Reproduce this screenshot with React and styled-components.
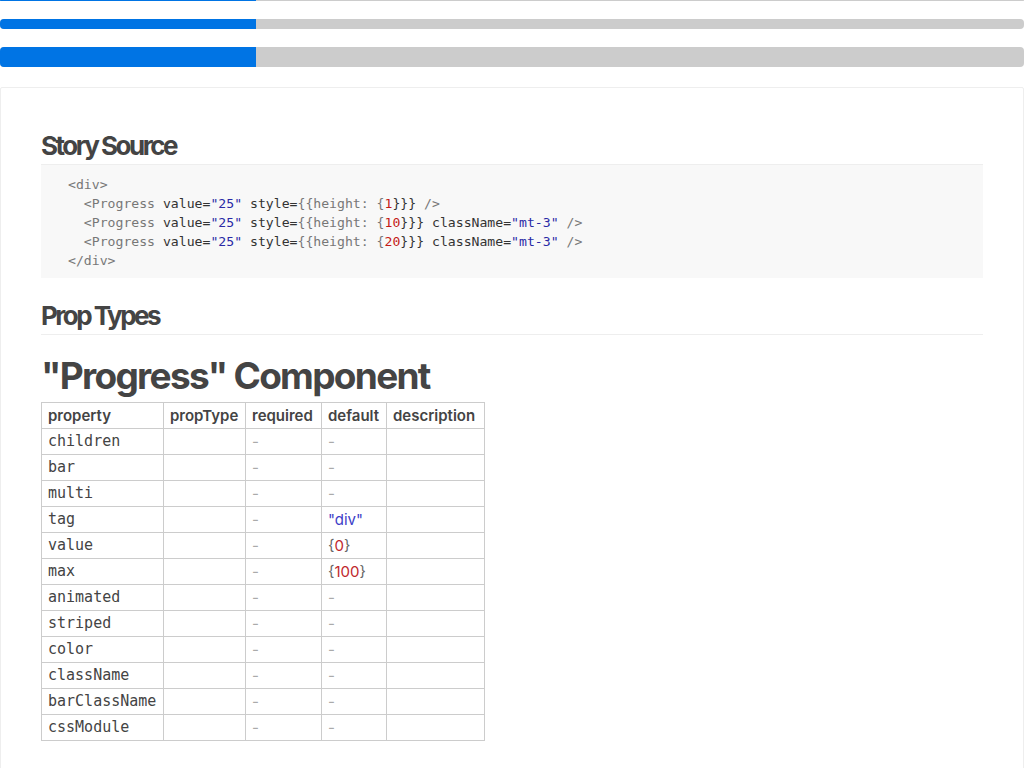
import React from "react";
import styled, { createGlobalStyle } from "styled-components";

const GlobalStyle = createGlobalStyle`
  html { overflow: hidden; }
  body {
    margin: 0;
    background: #fff;
    font-family: Inter, "Noto Sans", sans-serif;
    color: #444;
  }
`;

const Page = styled.div`
  display: flex;
  flex-direction: column;
`;

const Track = styled.div`
  display: flex;
  height: ${(p) => p.$h}px;
  margin-top: ${(p) => p.$mt || 0}px;
  background: #cccccc;
  border-radius: 4px;
  overflow: hidden;
`;

const Fill = styled.div`
  background: #0074e4;
  height: 100%;
`;

const Progress = ({ value, height, mt }) => (
  <Track $h={height} $mt={mt}>
    <Fill style={{ width: `${value}%` }} />
  </Track>
);

const InfoPanel = styled.section`
  margin: 20px 0 20px;
  padding: 20px 40px 40px;
  border: 1px solid #eee;
  border-radius: 2px;
  font-size: 15px;
  line-height: 1.45;
  color: #444;
`;

const SectionTitle = styled.h2`
  margin: 20px 0 0;
  padding: 1px 0 1px;
  font-size: 26px;
  line-height: 34px;
  font-weight: 700;
  letter-spacing: -2.5px;
  color: #444;
  border-bottom: 1px solid #eee;
`;

const CodeBlock = styled.pre`
  margin: 0;
  padding: 10px 27px 8px;
  background: #f8f8f8;
  font-family: "DejaVu Sans Mono", "Liberation Mono", monospace;
  font-size: 13.15px;
  line-height: 19px;
  color: #333;
`;

const tokenColors = {
  tag: "#777",
  attr: "#333",
  str: "#2a2aa6",
  num: "#c41a16",
  punc: "#777",
};

const Tok = styled.span`
  color: ${(p) => tokenColors[p.$k]};
`;

const ComponentTitle = styled.h1`
  margin: 15px 0 0;
  font-size: 37px;
  line-height: 52px;
  font-weight: 700;
  letter-spacing: -1.7px;
  color: #444;
`;

const Table = styled.table`
  border-collapse: collapse;
  table-layout: fixed;
  width: 443px;
`;

const Th = styled.th`
  text-align: left;
  font-weight: 600;
  padding: 2px 6px;
  line-height: 21px;
  border: 1px solid #ccc;
  white-space: nowrap;
  overflow: hidden;
`;

const Td = styled.td`
  padding: 2px 6px;
  line-height: 21px;
  border: 1px solid #ccc;
  white-space: nowrap;
  font-family: ${(p) =>
    p.$mono ? `"DejaVu Sans Mono", "Liberation Mono", monospace` : "inherit"};
`;

const Dash = styled.span`
  color: #aaa;
`;

const StrVal = styled.span`
  color: #4040c8;
`;

const Brace = styled.span`
  color: #666;
`;

const NumVal = styled.span`
  color: #c0282d;
`;

const Col = styled.col`
  width: ${(p) => p.$w}px;
`;

const codeLine = (h, cls) => (
  <>
    {"  "}
    <Tok $k="tag">&lt;Progress</Tok> <Tok $k="attr">value=</Tok>
    <Tok $k="str">"25"</Tok> <Tok $k="attr">style=</Tok>
    <Tok $k="punc">{"{{height: {"}</Tok>
    <Tok $k="num">{h}</Tok>
    <Tok $k="attr">{"}}}"}</Tok>
    {cls && (
      <>
        {" "}
        <Tok $k="attr">className=</Tok>
        <Tok $k="str">"mt-3"</Tok>
      </>
    )}{" "}
    <Tok $k="tag">/&gt;</Tok>
    {"\n"}
  </>
);

const props = [
  ["children"],
  ["bar"],
  ["multi"],
  ["tag", "str", '"div"'],
  ["value", "num", "0"],
  ["max", "num", "100"],
  ["animated"],
  ["striped"],
  ["color"],
  ["className"],
  ["barClassName"],
  ["cssModule"],
];

const DefaultValue = ({ kind, v }) => {
  if (kind === "str") return <StrVal>{v}</StrVal>;
  if (kind === "num")
    return (
      <>
        <Brace>{"{"}</Brace>
        <NumVal>{v}</NumVal>
        <Brace>{"}"}</Brace>
      </>
    );
  return <Dash>-</Dash>;
};

export default function App() {
  return (
    <Page>
      <GlobalStyle />
      <Progress value={25} height={1} />
      <Progress value={25} height={10} mt={18} />
      <Progress value={25} height={20} mt={18} />
      <InfoPanel>
        <SectionTitle>Story Source</SectionTitle>
        <CodeBlock>
          <Tok $k="tag">&lt;div&gt;</Tok>
          {"\n"}
          {codeLine(1, false)}
          {codeLine(10, true)}
          {codeLine(20, true)}
          <Tok $k="tag">&lt;/div&gt;</Tok>
        </CodeBlock>
        <SectionTitle>Prop Types</SectionTitle>
        <ComponentTitle>"Progress" Component</ComponentTitle>
        <Table>
          <colgroup>
            <Col $w={122} />
            <Col $w={82} />
            <Col $w={76} />
            <Col $w={65} />
            <Col $w={98} />
          </colgroup>
          <thead>
            <tr>
              <Th>property</Th>
              <Th>propType</Th>
              <Th>required</Th>
              <Th>default</Th>
              <Th>description</Th>
            </tr>
          </thead>
          <tbody>
            {props.map(([name, kind, v]) => (
              <tr key={name}>
                <Td $mono>{name}</Td>
                <Td />
                <Td>
                  <Dash>-</Dash>
                </Td>
                <Td>
                  <DefaultValue kind={kind} v={v} />
                </Td>
                <Td />
              </tr>
            ))}
          </tbody>
        </Table>
      </InfoPanel>
    </Page>
  );
}
